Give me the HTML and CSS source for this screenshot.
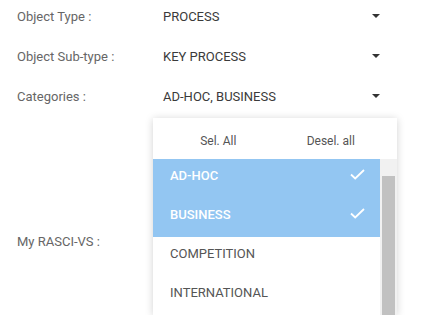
FILE: index.html
```html
<!DOCTYPE html>
<html>
<head>
<meta charset="utf-8">
<title>Object properties</title>
<link rel="stylesheet" href="styles.css">
</head>
<body>
<div class="form">
  <div class="row">
    <span class="label">Object Type :</span>
    <div class="select"><span class="value">PROCESS</span><span class="caret"></span></div>
  </div>
  <div class="row">
    <span class="label">Object Sub-type :</span>
    <div class="select"><span class="value">KEY PROCESS</span><span class="caret"></span></div>
  </div>
  <div class="row">
    <span class="label">Categories :</span>
    <div class="select"><span class="value">AD-HOC, BUSINESS</span><span class="caret"></span></div>
  </div>
  <div class="row row-rasci">
    <span class="label">My RASCI-VS :</span>
  </div>
</div>

<div class="dropdown">
  <div class="dd-head">
    <span class="dd-btn">Sel. All</span>
    <span class="dd-btn">Desel. all</span>
  </div>
  <div class="dd-body">
    <ul class="options">
      <li class="option selected">AD-HOC
        <svg class="check" width="15" height="11" viewBox="0 0 15 11"><path d="M1 5.5 L5.2 9.5 L14 1" fill="none" stroke="#fff" stroke-width="1.8"/></svg>
      </li>
      <li class="option selected">BUSINESS
        <svg class="check" width="15" height="11" viewBox="0 0 15 11"><path d="M1 5.5 L5.2 9.5 L14 1" fill="none" stroke="#fff" stroke-width="1.8"/></svg>
      </li>
      <li class="option">COMPETITION</li>
      <li class="option">INTERNATIONAL</li>
    </ul>
    <div class="scrollbar"><div class="thumb"></div></div>
  </div>
</div>
</body>
</html>
```

FILE: styles.css
```css
body {
  margin: 0;
  background: #fff;
  font-family: Roboto, "Liberation Sans", sans-serif;
  font-size: 13px;
  overflow: hidden;
}

.form {
  padding: 6px 0 0 17px;
}

.row {
  display: flex;
  align-items: center;
  height: 20px;
  margin-bottom: 20px;
}

.row-rasci {
  margin-top: 125px;
}

.label {
  width: 146px;
  color: #666;
}

.select {
  display: flex;
  align-items: center;
  width: 217px;
  color: #3a3a3a;
}

.value {
  flex: 1;
}

.caret {
  width: 0;
  height: 0;
  border-left: 4px solid transparent;
  border-right: 4px solid transparent;
  border-top: 4px solid #333;
  margin-top: -1px;
}

.dropdown {
  position: absolute;
  left: 153px;
  top: 118px;
  width: 244px;
  height: 197px;
  overflow: hidden;
  background: #fff;
  box-shadow: 0 1px 8px rgba(0, 0, 0, 0.18);
}

.dd-head {
  display: grid;
  grid-template-columns: 1fr 1fr;
  height: 41px;
  padding: 4px 10px 0 9px;
  box-sizing: border-box;
  align-items: center;
  font-size: 12px;
  color: #555;
}

.dd-btn {
  text-align: center;
}

.dd-body {
  display: flex;
}

.options {
  flex: 1;
  margin: 0;
  padding: 0;
  list-style: none;
}

.option {
  display: flex;
  align-items: flex-start;
  justify-content: space-between;
  height: 39px;
  box-sizing: border-box;
  padding: 10px 15px 0 17px;
  line-height: 14px;
  color: #555;
}

.option.selected {
  background: #93c6f2;
  color: #fff;
  font-weight: 500;
}

.scrollbar {
  width: 17px;
  background: #f1f1f1;
  padding-top: 17px;
}

.thumb {
  margin: 0 2px;
  height: 200px;
  background: #c1c1c1;
}
```
